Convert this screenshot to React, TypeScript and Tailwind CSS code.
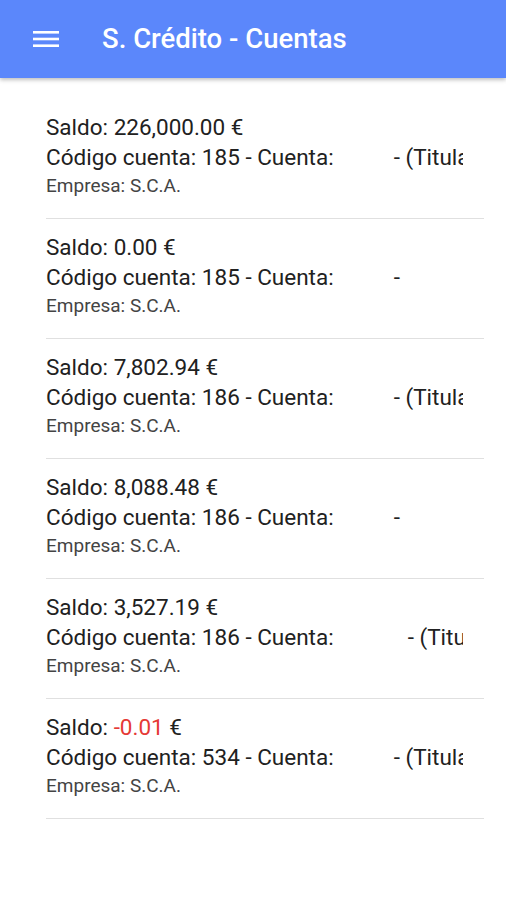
import React from "react";

type Cuenta = {
  saldo: string;
  negativo?: boolean;
  codigo: string;
  hueco: string;
  titular: boolean;
};

const cuentas: Cuenta[] = [
  { saldo: "226,000.00", codigo: "185", hueco: "w-[60px]", titular: true },
  { saldo: "0.00", codigo: "185", hueco: "w-[60px]", titular: false },
  { saldo: "7,802.94", codigo: "186", hueco: "w-[60px]", titular: true },
  { saldo: "8,088.48", codigo: "186", hueco: "w-[60px]", titular: false },
  { saldo: "3,527.19", codigo: "186", hueco: "w-[74px]", titular: true },
  { saldo: "-0.01", negativo: true, codigo: "534", hueco: "w-[60px]", titular: true },
];

function MenuIcon() {
  return (
    <svg width="26" height="20" viewBox="0 0 26 20" fill="#fff">
      <rect x="0" y="2" width="26" height="2.6" />
      <rect x="0" y="8.7" width="26" height="2.6" />
      <rect x="0" y="15.4" width="26" height="2.6" />
    </svg>
  );
}

export default function App() {
  return (
    <div className="w-[506px] h-[900px] bg-white overflow-hidden font-['Roboto',sans-serif]">
      {/* Toolbar */}
      <header className="h-[78px] bg-[#5b87fb] flex items-center shadow-[0_2px_4px_rgba(0,0,0,0.25)] relative z-10">
        <div className="w-[102px] pl-[33px] flex items-center">
          <MenuIcon />
        </div>
        <h1 className="text-white text-[27.5px] font-medium leading-none">S. Crédito - Cuentas</h1>
      </header>

      {/* List */}
      <div className="pt-[21px] pl-[46px] pr-[22px]">
        {cuentas.map((c, i) => (
          <div key={i} className="border-b border-[#e0e0e0] pt-[13px] pb-[19px] text-[#212121]">
            <div className="w-[417px] overflow-hidden whitespace-nowrap">
              <p className="text-[22.5px] leading-[30px]">
                Saldo: <span className={c.negativo ? "text-[#e53935]" : ""}>{c.saldo}</span> €
              </p>
              <p className="text-[22.5px] leading-[30px]">
                Código cuenta: {c.codigo} - Cuenta:
                <span className={`inline-block ${c.hueco}`} />
                -{c.titular ? " (Titular: Socio Cooperativista)" : ""}
              </p>
              <p className="text-[19px] leading-[27px] text-[#444]">Empresa: S.C.A.</p>
            </div>
          </div>
        ))}
      </div>
    </div>
  );
}
